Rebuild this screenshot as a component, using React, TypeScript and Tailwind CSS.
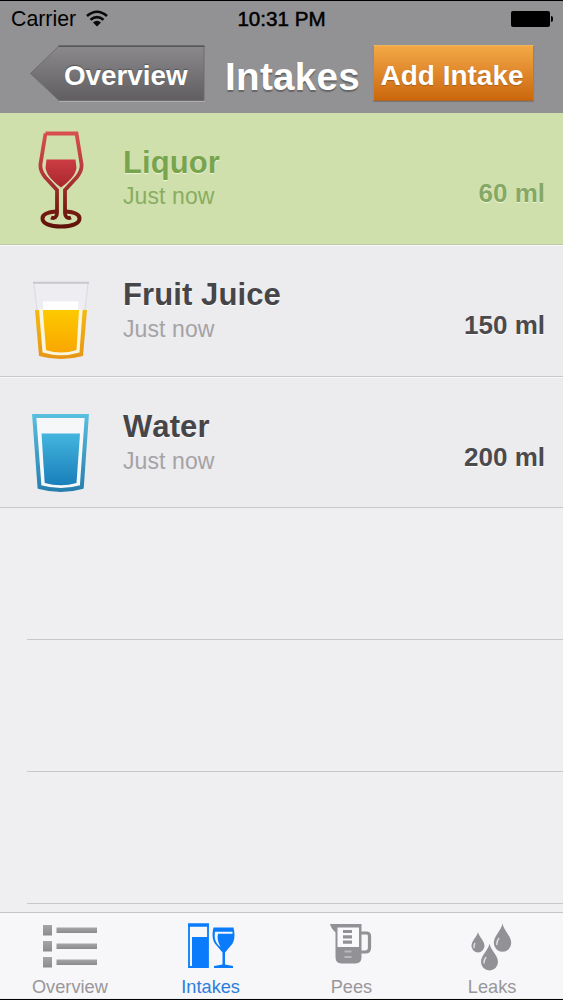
import { useState } from 'react';
import type { ReactNode } from 'react';

const WineIcon = () => (
  <svg width="46" height="98" viewBox="0 0 46 98" fill="none">
    <defs>
      <linearGradient id="wineLine" gradientUnits="userSpaceOnUse" x1="0" y1="0" x2="0" y2="98">
        <stop offset="0" stopColor="#d9504f" />
        <stop offset="0.45" stopColor="#b3363a" />
        <stop offset="0.75" stopColor="#802016" />
        <stop offset="1" stopColor="#5c1008" />
      </linearGradient>
      <linearGradient id="wineFill" x1="0" y1="0" x2="0" y2="1">
        <stop offset="0" stopColor="#cc3c43" />
        <stop offset="1" stopColor="#a9272c" />
      </linearGradient>
    </defs>
    <path d="M7.500 2.500H38.500L43.500 33C44 37.500 42.200 42 39 46L27 59V82C27 86 29.500 88 33 86.500M7.500 2.500L2.500 33C2 37.500 3.800 42 7 46L19 59V82C19 86 16.500 88 13 86.500" stroke="url(#wineLine)" strokeWidth="3.800" />
    <path d="M19 80.500C8.500 81 4.500 84 4.500 87.500C4.500 92.500 12 95.500 23 95.500S41.500 92.500 41.500 87.500C41.500 84 37.500 81 27 80.500" stroke="url(#wineLine)" strokeWidth="4" />
    <path d="M8.500 28.500H37.500L38.500 37C37.500 44 31 50.500 23 56.500C15 50.500 8.500 44 7.500 37Z" fill="url(#wineFill)" />
  </svg>
);

const JuiceIcon = () => (
  <svg width="58" height="80" viewBox="0 0 58 80" fill="none">
    <defs>
      <linearGradient id="juiceFill" x1="0" y1="0" x2="0" y2="1">
        <stop offset="0" stopColor="#fdca00" />
        <stop offset="1" stopColor="#f9a600" />
      </linearGradient>
      <linearGradient id="juiceEdge" x1="0" y1="0" x2="0" y2="1">
        <stop offset="0" stopColor="#f5b910" />
        <stop offset="1" stopColor="#e69516" />
      </linearGradient>
    </defs>
    <path d="M2 2H56L53 29H5Z" fill="#eeedf1" stroke="#dddce1" strokeWidth="1.200" />
    <path d="M1 1.700H57" stroke="#c9c8cd" strokeWidth="2" />
    <path d="M3 29H55L51 75Q29 81 7 75Z" fill="url(#juiceEdge)" />
    <path d="M7 28H50.700L47.500 71.500Q29 77 10.500 71.500Z" fill="#faf5df" />
    <path d="M11 20.500H46.500L46 30H11.500Z" fill="#fff" />
    <path d="M10.800 29H47L44.500 69Q29 74 14 69Z" fill="url(#juiceFill)" />
  </svg>
);

const WaterIcon = () => (
  <svg width="58" height="80" viewBox="0 0 58 80" fill="none">
    <defs>
      <linearGradient id="waterFill" x1="0" y1="0" x2="0" y2="1">
        <stop offset="0" stopColor="#43b5de" />
        <stop offset="1" stopColor="#197fba" />
      </linearGradient>
      <linearGradient id="waterEdge" x1="0" y1="0" x2="0" y2="1">
        <stop offset="0" stopColor="#58bede" />
        <stop offset="1" stopColor="#277fae" />
      </linearGradient>
    </defs>
    <path d="M2.200 3H54.800L49.800 74Q29 80 7.500 74Z" fill="#f5f7f9" stroke="url(#waterEdge)" strokeWidth="4" />
    <path d="M9.500 20.500H48L44.500 70Q29 74.500 12.700 70Z" fill="url(#waterFill)" />
  </svg>
);

const OverviewIcon = () => (
  <svg width="56" height="48" viewBox="0 0 56 48">
    <defs>
      <linearGradient id="listShade" x1="0" y1="0" x2="0" y2="1">
        <stop offset="0" stopColor="#a5a4a7" />
        <stop offset="1" stopColor="#8b8a8d" />
      </linearGradient>
    </defs>
    {[2, 18, 34].map((y) => (
      <g key={y} fill="url(#listShade)">
        <rect x="1" y={y} width="9" height="10.500" />
        <rect x="14.500" y={y + 2.5} width="40.500" height="5.500" />
      </g>
    ))}
  </svg>
);

const IntakesIcon = () => (
  <svg width="48" height="48" viewBox="0 0 48 48" fill="none">
    <path d="M2 1.500H21V44H2Z" stroke="#0a7cfb" strokeWidth="1.800" />
    <path d="M1 0.500H22V3.800H1ZM5 14H21V44H5Z" fill="#0a7cfb" />
    <path d="M26.500 4.500H46.500C48.500 13 47.500 19 43.500 23L38 29.500V41.500L46 43V45H27V43L35.500 41.500V29.500L30 23C25.500 19 24.500 13 26.500 4.500Z" fill="#0a7cfb" />
    <path d="M45.500 8.800H28C27 16 28.500 20 33.500 24C30.800 19 30 15 31 10.800H45.500Z" fill="#f3f6fc" />
  </svg>
);

const PeesIcon = () => (
  <svg width="42" height="42" viewBox="0 0 42 42" fill="none">
    <path d="M0 1H31.500V34Q31.500 40.500 25.500 40.500H11.500Q5.500 40.500 5.500 34V9.500Q1 5.500 0 1Z" fill="#929195" />
    <path d="M31 10H36.500Q39.500 10 39.500 13V25Q39.500 29 35.500 29H31" stroke="#929195" strokeWidth="3.200" />
    <path d="M7.500 4.500H29V24H7.500Z" fill="#faf9fc" />
    <path d="M13 8.500H22M13 13.800H22M13 19.200H22" stroke="#929195" strokeWidth="3.200" />
    <path d="M14.500 28.500H21.500M14.500 34H21.500" stroke="#b9b8bc" strokeWidth="1.800" />
  </svg>
);

const LeaksIcon = () => (
  <svg width="42" height="48" viewBox="0 0 42 48" fill="none">
    <g fill="#929195">
      <path d="M7 9C8 14 13.500 17.500 13.500 23A6.500 6.500 0 0 1 0.500 23C0.500 17.500 6 14 7 9Z" />
      <path d="M31.500 0.500C33 8 40.200 13 40.200 20A8.700 8.700 0 0 1 22.800 20C22.800 13 30 8 31.500 0.500Z" />
      <path d="M18.500 20.500C20 28 27 32 27 39A8.500 8.500 0 0 1 10 39C10 32 17 28 18.500 20.500Z" />
    </g>
    <g stroke="#dedde1" strokeWidth="1.500" strokeLinecap="round">
      <path d="M3.800 20.500Q2.800 22 3 24.500M27.800 15.500Q25.500 18 25.800 21.500M14.800 34.500Q12.800 37 13 40" />
    </g>
  </svg>
);

interface Intake {
  name: string;
  time: string;
  amount: string;
  icon: ReactNode;
  highlighted?: boolean;
}

const intakes: Intake[] = [
  { name: 'Liquor', time: 'Just now', amount: '60 ml', icon: <WineIcon />, highlighted: true },
  { name: 'Fruit Juice', time: 'Just now', amount: '150 ml', icon: <JuiceIcon /> },
  { name: 'Water', time: 'Just now', amount: '200 ml', icon: <WaterIcon /> },
];

const tabs = [
  { id: 'overview', label: 'Overview', icon: <OverviewIcon /> },
  { id: 'intakes', label: 'Intakes', icon: <IntakesIcon /> },
  { id: 'pees', label: 'Pees', icon: <PeesIcon /> },
  { id: 'leaks', label: 'Leaks', icon: <LeaksIcon /> },
];

const StatusBar = () => (
  <div className="grid h-9 grid-cols-3 items-center text-black">
    <div className="flex items-center gap-2.5 pl-[11px]">
      <span className="text-[21.3px] leading-9">Carrier</span>
      <svg className="-mt-0.5" width="22" height="17" viewBox="0 0 22 17" fill="none" stroke="#080808" strokeWidth="2.600">
        <path d="M1 6Q11 -2.500 21 6M4.500 9.800Q11 4.300 17.500 9.800" />
        <path d="M7 12.500Q11 9.200 15 12.500L11 16.500Z" fill="#080808" stroke="none" />
      </svg>
    </div>
    <div className="text-center text-[20.6px] leading-9 [-webkit-text-stroke:0.5px_black]">10:31 PM</div>
    <div className="flex items-center justify-end pr-2.5">
      <div className="h-4 w-[39px] rounded-[2px] bg-black" />
      <div className="ml-px h-[6px] w-[2.500px] rounded-r-full bg-black" />
    </div>
  </div>
);

const IntakeRow = ({ name, time, amount, icon, highlighted }: Intake) => (
  <li
    className={`flex border-b pr-[18px] ${
      highlighted
        ? 'h-[132px] border-[#bdc7aa] bg-[#cfe0ac]'
        : 'h-[131.5px] border-t border-[#c9c8cb] border-t-[#f8f7f9] bg-[#ecebee]'
    }`}
  >
    <div className={`flex w-[123px] justify-center pr-[2px] ${highlighted ? 'pt-[18px]' : 'pt-[35px]'}`}>{icon}</div>
    <div className={`flex-1 ${highlighted ? 'pt-8' : 'pt-[31px]'}`}>
      <div
        className={`text-[31px] leading-9 font-bold tracking-[0.1px] ${
          highlighted ? 'text-[#78a44e] [text-shadow:0_1px_1px_#edf5dc]' : 'text-[#464548] [text-shadow:0_1px_1px_white]'
        }`}
      >
        {name}
      </div>
      <div
        className={`text-[23px] leading-8 tracking-[0.1px] ${
          highlighted ? '-mt-px text-[#88ad61]' : 'text-[#a4a3a6]'
        }`}
      >
        {time}
      </div>
    </div>
    <div
      className={`text-[26px] leading-8 font-bold ${
        highlighted
          ? 'pt-16 text-[#86a866] [text-shadow:0_1px_1px_#edf5dc]'
          : 'pt-[63px] text-[#4b4a4d] [text-shadow:0_1px_1px_white]'
      }`}
    >
      {amount}
    </div>
  </li>
);

const App = () => {
  const [currentTab, setCurrentTab] = useState('intakes');

  return (
    <div className="flex h-[1000px] w-[563px] flex-col overflow-hidden border-y border-black bg-[#efeef1] font-['Liberation_Sans',Arial,sans-serif] [font-kerning:none]">
      {/* Status bar and navigation */}
      <header className="h-28 shrink-0 bg-[#929193]">
        <StatusBar />
        <div className="flex pt-2 pl-[30px]">
          <button className="relative h-[57px] w-[175px] pl-[34px] text-left">
            <svg className="absolute inset-0" width="175" height="57" viewBox="0 0 175 57">
              <defs>
                <linearGradient id="backFill" x1="0" y1="0" x2="0" y2="1">
                  <stop offset="0" stopColor="#8b898b" />
                  <stop offset="1" stopColor="#605e60" />
                </linearGradient>
              </defs>
              <path d="M29 56.500H175" stroke="#adacae" />
              <path d="M0.500 28.500L29 1H174V55.500H29Z" fill="url(#backFill)" stroke="#6e6d6f" />
              <path d="M28.500 1.200H174.500" stroke="#575658" strokeWidth="1.500" />
            </svg>
            <span className="relative top-[2px] text-[27.8px] leading-[56px] font-bold text-white [text-shadow:0_-1px_1px_#555]">Overview</span>
          </button>
          <h1 className="ml-5 w-[148px] text-[38.6px] leading-[63px] font-bold tracking-[0.3px] whitespace-nowrap text-white [text-shadow:0_2px_1px_#666]">
            Intakes
          </h1>
          <button className="h-[56px] w-[161px] rounded-[1px] border border-t-[#edb45e] border-r-[#b97b35] border-b-[#ad6424] border-l-[#c18640] bg-linear-to-b from-[#f3a845] to-[#cb6708] pt-[3px] pr-[3px] text-center text-[28px] leading-[54px] font-bold whitespace-nowrap text-white shadow-[0_1px_1px_#777] [text-shadow:0_1px_1px_#a9601c]">
            Add Intake
          </button>
        </div>
      </header>

      {/* Intake list, followed by blank rows */}
      <main className="h-[799px] shrink-0 overflow-hidden">
        <ul>
          {intakes.map((intake) => (
            <IntakeRow key={intake.name} {...intake} />
          ))}
        </ul>
        <div className="ml-[27px]">
          <div className="h-[132px] border-b border-[#c8c7cb]" />
          <div className="h-[132px] border-b border-[#c8c7cb]" />
          <div className="h-[132px] border-b border-[#c8c7cb]" />
        </div>
      </main>

      <nav className="grid h-[86px] shrink-0 grid-cols-4 border-t border-[#c6c5c9] bg-[#f7f6f9]">
        {tabs.map((tab) => (
          <button
            key={tab.id}
            onClick={() => setCurrentTab(tab.id)}
            className={`flex flex-col items-center pt-2.5 pr-px ${currentTab === tab.id ? 'text-[#2c7edc]' : 'text-[#98979a]'}`}
          >
            <span className="flex h-[50px] items-start justify-center">{tab.icon}</span>
            <span className="pt-1 text-[18.2px] leading-[20px]">{tab.label}</span>
          </button>
        ))}
      </nav>
    </div>
  );
};

export default App;
